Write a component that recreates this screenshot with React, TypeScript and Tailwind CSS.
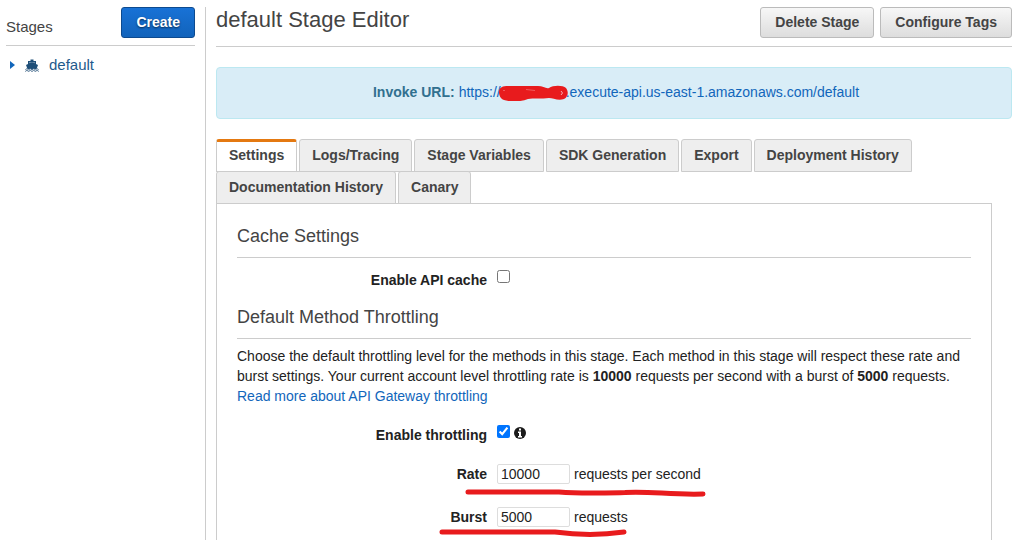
const tabs = [
  "Settings",
  "Logs/Tracing",
  "Stage Variables",
  "SDK Generation",
  "Export",
  "Deployment History",
  "Documentation History",
  "Canary",
];

function ShipIcon() {
  return (
    <svg viewBox="0 0 14 13" className="h-[13px] w-[14px] shrink-0" aria-hidden="true">
      <path d="M5.500 0.500h3V2h2.500v3l2 1-1.500 4h-9L1 6l2-1V2h2.500z" fill="#1f4f78" />
      <path d="M4 3h6v1.200L7 3.400 4 4.200z" fill="#6f8fab" />
      <path
        d="M0.300 10.800l1.600-1.200 1.700 1.200 1.700-1.200 1.700 1.200 1.700-1.200 1.700 1.200 1.700-1.200 1.600 1.200M0.300 12.500l1.600-1.200 1.700 1.200 1.700-1.200 1.700 1.200 1.700-1.200 1.700 1.200 1.700-1.200 1.600 1.200"
        fill="none"
        stroke="#4a6f90"
      />
    </svg>
  );
}

function InfoIcon() {
  return (
    <svg viewBox="0 0 12 12" className="mt-[2px] ml-1 size-3 shrink-0" aria-hidden="true">
      <circle cx="6" cy="6" r="6" fill="#1a1a1a" />
      <path d="M5 1.500h2v2H5zM4 4.500h3V9h1v1.500H4V9h1V6H4z" fill="#fff" />
    </svg>
  );
}

function Sidebar() {
  return (
    <aside className="w-[206px] shrink-0 border-r border-[#ccc] pr-[10px] pl-[6px]">
      <div className="flex h-[39px] items-start justify-between border-b border-[#ccc]">
        <h2 className="pt-[10px] text-[15px] leading-5 text-[#444]">Stages</h2>
        <button className="h-[31px] rounded-[3px] border border-[#0d4a8f] bg-linear-to-b from-[#1872d6] to-[#1263bb] px-[14px] pb-[2px] text-sm font-bold text-white [text-shadow:0_1px_2px_#00000099]">
          Create
        </button>
      </div>
      <nav className="pt-[9px]">
        <a href="#default" className="flex h-5 items-center text-[15px] leading-5 text-[#1f5a8c]">
          <svg viewBox="0 0 5 8" className="ml-1 h-2 w-[5px]" fill="#1166bb" aria-hidden="true">
            <path d="M0 0l5 4-5 4z" />
          </svg>
          <span className="mr-[10px] ml-[10px]">
            <ShipIcon />
          </span>
          default
        </a>
      </nav>
    </aside>
  );
}

function GreyButton({ children }: { children: string }) {
  return (
    <button className="h-[31px] rounded-[3px] border border-[#bbb] bg-linear-to-b from-[#f7f7f7] to-[#dddddd] px-[14px] pb-[2px] text-sm font-bold text-[#444]">
      {children}
    </button>
  );
}

function Tabs() {
  return (
    <div role="tablist" className="flex flex-wrap gap-x-[2px]">
      {tabs.map((tab, i) => (
        <button
          key={tab}
          role="tab"
          aria-selected={i === 0}
          className={
            i === 0
              ? "-mb-px h-[33px] rounded-t-[3px] border border-t-[3px] border-[#ccc] border-t-[#e47911] bg-white px-3 pb-1 text-sm font-bold text-[#444]"
              : "-mb-px h-[33px] rounded-t-[3px] border border-[#ccc] bg-[#eee] px-3 pb-[2px] text-sm font-bold text-[#444]"
          }
        >
          {tab}
        </button>
      ))}
    </div>
  );
}

function SectionTitle({ children }: { children: string }) {
  return (
    <h2 className="h-[34px] border-b border-[#ccc] text-lg leading-6 text-[#444]">{children}</h2>
  );
}

function NumberRow({ id, label, value, unit }: { id: string; label: string; value: string; unit: string }) {
  return (
    <div className="flex h-5 items-center">
      <label htmlFor={id} className="w-[250px] text-right font-bold">
        {label}
      </label>
      <input
        id={id}
        defaultValue={value}
        className="mr-1 ml-[10px] h-5 w-[73px] rounded-[2px] border border-[#ddd] bg-white px-[3px] text-sm text-[#222]"
      />
      <span>{unit}</span>
    </div>
  );
}

function SettingsPanel() {
  return (
    <section className="mr-5 flex-1 border border-b-0 border-[#ccc] px-5 pt-5 text-sm leading-5 text-[#222]">
      <SectionTitle>Cache Settings</SectionTitle>
      <div className="flex items-start pt-3 pb-[15px]">
        <label htmlFor="cache" className="w-[250px] text-right font-bold">
          Enable API cache
        </label>
        <input id="cache" type="checkbox" className="ml-[10px] size-[13px]" />
      </div>
      <SectionTitle>Default Method Throttling</SectionTitle>
      <p className="pt-[7px]">
        Choose the default throttling level for the methods in this stage. Each method in this stage
        will respect these rate and burst settings. Your current account level throttling rate is{" "}
        <b>10000</b> requests per second with a burst of <b>5000</b> requests.{" "}
        <a href="#throttling" className="text-[#1166bb]">
          Read more about API Gateway throttling
        </a>
      </p>
      <div className="flex items-start pt-[19px] pb-[19px]">
        <label htmlFor="throttling" className="w-[250px] text-right font-bold">
          Enable throttling
        </label>
        <input id="throttling" type="checkbox" defaultChecked className="ml-[10px] size-[13px] accent-[#0075ff]" />
        <InfoIcon />
      </div>
      <div className="relative flex flex-col gap-[23px]">
        <NumberRow id="rate" label="Rate" value="10000" unit="requests per second" />
        <NumberRow id="burst" label="Burst" value="5000" unit="requests" />
        <svg
          viewBox="0 0 270 76"
          className="pointer-events-none absolute top-0 left-[200px] h-[76px] w-[270px]"
          fill="none"
          stroke="#e81b1d"
          strokeWidth="5"
          strokeLinecap="round"
          aria-hidden="true"
        >
          <path d="M31 28H122C145 30 170 29 188 28.500C214 27 233 31 266 30" />
          <path d="M5 68H118C140 71 166 71 187 68" />
        </svg>
      </div>
    </section>
  );
}

export default function App() {
  return (
    <div className="flex min-h-screen bg-white pt-[7px] font-['Liberation_Sans',Arial,sans-serif]">
      <Sidebar />
      <main className="flex min-w-0 flex-1 flex-col pr-1 pl-[10px]">
        <header className="flex h-10 items-start justify-between border-b border-[#ccc]">
          <h1 className="text-[22px] leading-[26px] text-[#444]">default Stage Editor</h1>
          <div className="flex gap-[6px]">
            <GreyButton>Delete Stage</GreyButton>
            <GreyButton>Configure Tags</GreyButton>
          </div>
        </header>
        <div className="my-5 flex h-[52px] items-center justify-center rounded-[4px] border border-[#bce8f1] bg-[#d9edf7] pb-[2px] pl-1 text-sm leading-5 text-[#31708f]">
          <b className="mr-1">Invoke URL:</b>
          <a href="#invoke" className="flex items-center text-[#1166bb]">
            https://
            <svg viewBox="0 0 69 16" className="mt-[2px] -mr-[2px] -ml-[2px] h-4 w-[69px]" fill="#e81b1d" aria-hidden="true">
              <path d="M0 7C0 2 4 1 9 1H39C44 1 47 4 50 3C54 0 64 0 67 3C70 7 69 12 65 14C59 16 54 13 50 13C43 14 34 13 29 14C22 17 11 17 5 15C2 14 0 11 0 7Z" />
              <path d="M62 6q3 2 0 4" fill="none" stroke="#f7aeb4" />
              <path d="M27 4.500l9 1M4 5.500h2" stroke="#f16a6c" strokeWidth="0.800" />
            </svg>
            .execute-api.us-east-1.amazonaws.com/default
          </a>
        </div>
        <Tabs />
        <SettingsPanel />
      </main>
    </div>
  );
}
